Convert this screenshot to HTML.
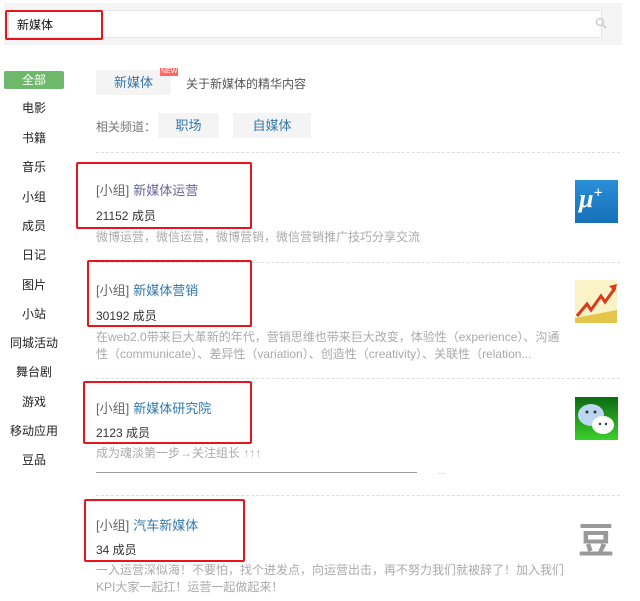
<!DOCTYPE html><html><head><meta charset="utf-8"><style>
*{margin:0;padding:0;box-sizing:border-box}
body{width:640px;height:601px;background:#fff;font-family:"Liberation Sans","Noto Sans CJK SC",sans-serif;position:relative;overflow:hidden;color:#333}
.a{position:absolute;white-space:nowrap}
.red{position:absolute;border:2px solid #e8141b;border-radius:2px}
.side{position:absolute;left:5px;width:58px;text-align:center;font-size:12px;color:#222}
.dash{position:absolute;left:96px;width:524px;border-top:1px dashed #ddd}
.t{font-size:13px;color:#666}
.t b{font-weight:normal;color:#37a;margin-left:4px}
.c{font-size:12px;color:#333}
.d{font-size:12px;color:#aaa;line-height:17px;white-space:normal;width:470px}
</style></head><body>
<div class="a" style="left:4px;top:3px;width:618px;height:42px;background:#f5f5f5"></div>
<div class="a" style="left:8px;top:10px;width:594px;height:28px;background:#fff;border:1px solid #e5e5e5"></div>
<div class="a" style="left:17px;top:16px;font-size:12px;color:#111">新媒体</div>
<svg class="a" style="left:595px;top:17px" width="12" height="12" viewBox="0 0 12 12"><circle cx="5" cy="5" r="3.5" fill="none" stroke="#ccc" stroke-width="1.5"/><path d="M7.5 7.5L11 11" stroke="#ccc" stroke-width="1.8"/></svg>
<div class="red" style="left:5px;top:10px;width:98px;height:30px"></div>

<div class="a" style="left:4px;top:71px;width:60px;height:18px;background:#6db86a;border-radius:2px;color:#fff;font-size:12px;text-align:center;line-height:18px">全部</div>
<div class="side" style="top:99px">电影</div>
<div class="side" style="top:129px">书籍</div>
<div class="side" style="top:158px">音乐</div>
<div class="side" style="top:188px">小组</div>
<div class="side" style="top:217px">成员</div>
<div class="side" style="top:246px">日记</div>
<div class="side" style="top:276px">图片</div>
<div class="side" style="top:305px">小站</div>
<div class="side" style="top:334px">同城活动</div>
<div class="side" style="top:363px">舞台剧</div>
<div class="side" style="top:393px">游戏</div>
<div class="side" style="top:422px">移动应用</div>
<div class="side" style="top:451px">豆品</div>

<div class="a" style="left:96px;top:70px;width:75px;height:25px;background:#f4f4f4;color:#37a;font-size:13px;text-align:center;line-height:25px">新媒体</div>
<div class="a" style="left:160px;top:68px;font-size:7px;color:#fff;background:#f66;padding:0 1px;line-height:8px">NEW</div>
<div class="a" style="left:186px;top:75px;font-size:12px;color:#555">关于新媒体的精华内容</div>
<div class="a" style="left:96px;top:118px;font-size:12px;color:#777">相关频道：</div>
<div class="a" style="left:158px;top:113px;width:61px;height:25px;background:#f4f4f4;color:#37a;font-size:13px;text-align:center;line-height:25px">职场</div>
<div class="a" style="left:233px;top:113px;width:78px;height:25px;background:#f4f4f4;color:#37a;font-size:13px;text-align:center;line-height:25px">自媒体</div>
<div class="dash" style="top:152px"></div>

<div class="a t" style="left:96px;top:180px">[小组]<b style="color:#669">新媒体运营</b></div>
<div class="a c" style="left:96px;top:207px">21152 成员</div>
<div class="a d" style="left:96px;top:229px">微博运营，微信运营，微博营销，微信营销推广技巧分享交流</div>
<div class="red" style="left:76px;top:162px;width:176px;height:67px"></div>
<div class="a" style="left:575px;top:180px;width:43px;height:43px;background:linear-gradient(#2a8fd8,#1670b8);color:#fff;font:italic bold 26px 'Liberation Serif',serif;padding:4px 0 0 4px">μ<sup style="font-size:16px">+</sup></div>
<div class="dash" style="top:262px"></div>

<div class="a t" style="left:96px;top:280px">[小组]<b>新媒体营销</b></div>
<div class="a c" style="left:96px;top:307px">30192 成员</div>
<div class="a d" style="left:96px;top:329px">在web2.0带来巨大革新的年代，营销思维也带来巨大改变，体验性（experience）、沟通性（communicate）、差异性（variation）、创造性（creativity）、关联性（relation...</div>
<div class="red" style="left:87px;top:260px;width:165px;height:67px"></div>
<svg class="a" style="left:575px;top:280px" width="42" height="43"><rect width="42" height="43" fill="#fbf3c8"/><path d="M0 38L42 30V43H0Z" fill="#e6c64a"/><path d="M2 36L12 24L16 30L26 16L30 22L40 8" stroke="#d93a1c" stroke-width="3" fill="none"/><path d="M34 6L42 4L40 12Z" fill="#d93a1c"/></svg>
<div class="dash" style="top:378px"></div>

<div class="a t" style="left:96px;top:398px">[小组]<b>新媒体研究院</b></div>
<div class="a c" style="left:96px;top:424px">2123 成员</div>
<div class="a d" style="left:96px;top:445px">成为魂淡第一步→关注组长 ↑↑↑</div>
<div class="a" style="left:96px;top:472px;width:321px;border-top:1px solid #999"></div>
<div class="a" style="left:438px;top:466px;font-size:9px;color:#bbb">...</div>
<div class="red" style="left:83px;top:381px;width:169px;height:63px"></div>
<svg class="a" style="left:575px;top:397px" width="43" height="43"><defs><linearGradient id="g" x1="0" y1="0" x2="0" y2="1"><stop offset="0" stop-color="#0c6a12"/><stop offset="1" stop-color="#3bcf2a"/></linearGradient></defs><rect width="43" height="43" fill="url(#g)"/><ellipse cx="16" cy="18" rx="13" ry="11" fill="#bcd7f2"/><ellipse cx="28" cy="28" rx="11" ry="9" fill="#fff"/><circle cx="12" cy="15" r="1.5" fill="#333"/><circle cx="20" cy="15" r="1.5" fill="#333"/><circle cx="25" cy="27" r="1.2" fill="#333"/><circle cx="31" cy="27" r="1.2" fill="#333"/></svg>
<div class="dash" style="top:495px"></div>

<div class="a t" style="left:96px;top:515px">[小组]<b>汽车新媒体</b></div>
<div class="a c" style="left:96px;top:541px">34 成员</div>
<div class="a d" style="left:96px;top:562px">一入运营深似海！不要怕，找个迸发点，向运营出击，再不努力我们就被辞了！加入我们KPI大家一起扛！运营一起做起来！</div>
<div class="red" style="left:84px;top:499px;width:161px;height:63px"></div>
<div class="a" style="left:578px;top:512px;font-size:36px;color:#999;font-weight:bold">豆</div>
</body></html>
